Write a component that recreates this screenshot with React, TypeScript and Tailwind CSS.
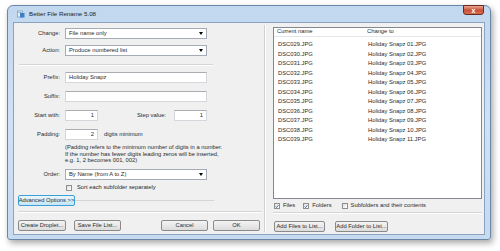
import React from 'react';

const rows = [
  ['DSC029.JPG', 'Holiday Snapz 01.JPG'],
  ['DSC030.JPG', 'Holiday Snapz 02.JPG'],
  ['DSC031.JPG', 'Holiday Snapz 03.JPG'],
  ['DSC032.JPG', 'Holiday Snapz 04.JPG'],
  ['DSC033.JPG', 'Holiday Snapz 05.JPG'],
  ['DSC034.JPG', 'Holiday Snapz 06.JPG'],
  ['DSC035.JPG', 'Holiday Snapz 07.JPG'],
  ['DSC036.JPG', 'Holiday Snapz 08.JPG'],
  ['DSC037.JPG', 'Holiday Snapz 09.JPG'],
  ['DSC038.JPG', 'Holiday Snapz 10.JPG'],
  ['DSC039.JPG', 'Holiday Snapz 11.JPG'],
];

const Select = ({ value }: { value: string }) => (
  <div className="w-[142px] h-[11px] bg-white border border-[#a5acb5] flex items-center justify-between pl-[3px] pr-[3px]">
    <span>{value}</span>
    <span className="w-0 h-0 border-l-[2.5px] border-r-[2.5px] border-t-[3px] border-l-transparent border-r-transparent border-t-black" />
  </div>
);

const Input = ({ w, value, right }: { w: string; value?: string; right?: boolean }) => (
  <div className={`${w} h-[11px] bg-white border border-[#d3d6db] border-t-[#abadb3] flex items-center px-[3px] ${right ? 'justify-end' : ''}`}>
    {value}
  </div>
);

const Button = ({ label, w }: { label: string; w: string }) => (
  <div className={`${w} h-[11px] rounded-[2px] border border-[#8a8a8a] bg-gradient-to-b from-[#f4f4f4] to-[#dcdcdc] flex items-center justify-center whitespace-nowrap`}>
    {label}
  </div>
);

const Check = ({ checked }: { checked?: boolean }) => (
  <div className="w-[6px] h-[6px] border border-[#8f8f8f] bg-gradient-to-br from-[#e0e0e0] to-white flex items-center justify-center">
    {checked && (
      <svg width="5" height="5" viewBox="0 0 5 5">
        <path d="M0.8 2.5 L2 3.8 L4.3 0.8" stroke="#2b4f8f" strokeWidth="1" fill="none" />
      </svg>
    )}
  </div>
);

const Label = ({ text }: { text: string }) => (
  <div className="w-[47px] text-right pr-[1px]">{text}</div>
);

export default function App() {
  return (
    <div className="w-[500px] h-[251px] bg-white pl-[7px] pt-[5px] text-[5.8px] text-[#2a2a2a] leading-none whitespace-nowrap" style={{ fontFamily: '"Liberation Sans", Arial, sans-serif' }}>
      <div className="relative w-[484px] h-[235px] rounded-t-[6px] rounded-b-[3px] border border-[#6b86a6] bg-gradient-to-b from-[#c2d8ef] via-[#cfe1f4] to-[#c6dbf0] shadow-[2px_3px_6px_rgba(0,0,0,0.35)] flex flex-col px-[5px] pb-[4px]">
        {/* title bar */}
        <div className="h-[16px] flex items-center gap-[4px] pl-[4px] shrink-0">
          <svg width="8" height="8" viewBox="0 0 8 8">
            <rect x="0.5" y="1" width="5" height="6" fill="#e8eef6" stroke="#6a8ab0" strokeWidth="0.6" />
            <rect x="3" y="3" width="4.5" height="4.5" fill="#3c7fc8" />
            <rect x="1.5" y="2" width="3" height="1" fill="#7fb0e0" />
          </svg>
          <span className="text-[6.2px] text-[#222]">Better File Rename 5.08</span>
        </div>
        <div className="absolute right-[6px] top-[-1px] w-[21px] h-[10px] rounded-b-[3px] border border-[#6b2a1e] bg-gradient-to-b from-[#e8a593] via-[#c9513a] to-[#d86c50] flex items-center justify-center text-white text-[7px] font-bold">
          x
        </div>

        {/* client area */}
        <div className="flex-1 border border-[#8aa3c0] bg-[#f0f0f0] flex">
          {/* left pane */}
          <div className="w-[250px] flex flex-col">
            <div className="flex items-center mt-[5px]"><Label text="Change:" /><div className="ml-[4px]"><Select value="File name only" /></div></div>
            <div className="flex items-center mt-[6px]"><Label text="Action:" /><div className="ml-[4px]"><Select value="Produce numbered list" /></div></div>
            <div className="h-px bg-[#d5d5d5] border-b border-white ml-[5px] w-[194px] mt-[8px] box-content" />
            <div className="flex items-center mt-[6px]"><Label text="Prefix:" /><div className="ml-[4px]"><Input w="w-[142px]" value="Holiday Snapz" /></div></div>
            <div className="flex items-center mt-[8px]"><Label text="Suffix:" /><div className="ml-[4px]"><Input w="w-[142px]" /></div></div>
            <div className="flex items-center mt-[8px]">
              <Label text="Start with:" />
              <div className="ml-[4px]"><Input w="w-[33px]" value="1" right /></div>
              <div className="w-[76px] text-right pr-[8px]">Step value:</div>
              <Input w="w-[33px]" value="1" right />
            </div>
            <div className="flex items-center mt-[8px]">
              <Label text="Padding:" />
              <div className="ml-[4px]"><Input w="w-[33px]" value="2" right /></div>
              <span className="ml-[6px]">digits minimum</span>
            </div>
            <div className="ml-[51px] mt-[4px] leading-[6.7px]">
              <div>(Padding refers to the minimum number of digits in a number.</div>
              <div>If the number has fewer digits leading zeros will be inserted,</div>
              <div>e.g. 1, 2 becomes 001, 002)</div>
            </div>
            <div className="flex items-center mt-[5px]"><Label text="Order:" /><div className="ml-[4px]"><Select value="By Name (from A to Z)" /></div></div>
            <div className="flex items-center gap-[5px] ml-[52px] mt-[5px]">
              <Check />
              <span>Sort each subfolder separately</span>
            </div>
            <div className="flex items-center mt-[4px] ml-[4px]">
              <div className="w-[57px] h-[11px] rounded-[2px] border border-[#3c9fd8] bg-gradient-to-b from-[#eaf6fd] to-[#c4e5f6] flex items-center justify-center">
                Advanced Options &gt;&gt;
              </div>
              <div className="w-[139px] h-px bg-[#d5d5d5]" />
            </div>
            <div className="h-px bg-[#d5d5d5] border-b border-white ml-[4px] mr-[2px] mt-[5px] box-content" />
            <div className="flex items-center mt-[7px] ml-[4px]">
              <Button label="Create Droplet..." w="w-[48px]" />
              <div className="ml-[8px]"><Button label="Save File List..." w="w-[47px]" /></div>
              <div className="ml-[40px]"><Button label="Cancel" w="w-[47px]" /></div>
              <div className="ml-[5px]"><Button label="OK" w="w-[47px]" /></div>
            </div>
          </div>

          {/* divider */}
          <div className="w-px bg-[#d0d0d0] border-r border-white box-content mt-[2px] mb-[2px]" />

          {/* right pane */}
          <div className="flex-1 flex flex-col pl-[7px] pr-[2px]">
            <div className="mt-[4px] h-[172px] bg-white border border-[#828790] flex flex-col">
              <div className="h-[9px] flex items-center border-b border-[#e3e6ea] pl-[3px] shrink-0">
                <span className="w-[90px]">Current name</span>
                <span>Change to</span>
              </div>
              <div className="pt-[3px] pl-[4px] leading-[9.5px]">
                {rows.map(([a, b]) => (
                  <div key={a} className="flex h-[9.5px] items-center">
                    <span className="w-[90px]">{a}</span>
                    <span>{b}</span>
                  </div>
                ))}
              </div>
            </div>
            <div className="flex items-center mt-[4px] ml-[1px]">
              <Check checked />
              <span className="ml-[3px]">Files</span>
              <div className="ml-[8px]"><Check checked /></div>
              <span className="ml-[3px]">Folders</span>
              <div className="ml-[10px]"><Check /></div>
              <span className="ml-[3px]">Subfolders and their contents</span>
            </div>
            <div className="h-px bg-[#d5d5d5] border-b border-white mt-[3px] box-content" />
            <div className="flex items-center mt-[7px] ml-[1px]">
              <Button label="Add Files to List..." w="w-[51px]" />
              <div className="ml-[10px]"><Button label="Add Folder to List..." w="w-[53px]" /></div>
            </div>
          </div>
        </div>
      </div>
    </div>
  );
}
